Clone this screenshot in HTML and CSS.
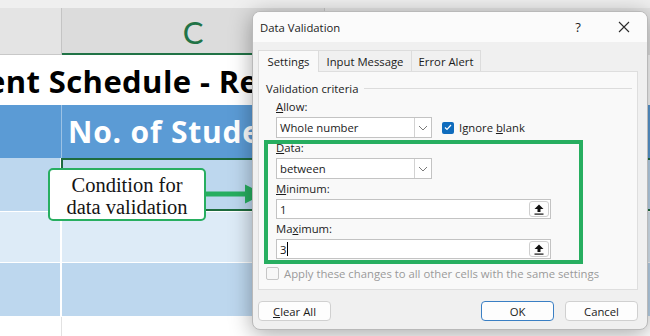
FILE: index.html
```html
<!DOCTYPE html>
<html lang="en">

<head>
    <meta charset="UTF-8">
    <meta name="viewport" content="width=device-width, initial-scale=1.0">
    <title>Data Validation</title>

    <link rel="stylesheet" href="styles.css">
</head>

<body>
    <div class="sheet">
        <div class="sheet-top"></div>
        <div class="row col-heads">
            <div class="cell col-b"></div>
            <div class="cell col-c">C</div>
            <div class="cell col-d"></div>
        </div>
        <div class="row title-row">
            <div class="title-text">ent Schedule - Report</div>
        </div>
        <div class="row head-row">
            <div class="cell col-b"></div>
            <div class="cell col-c">No. of Students</div>
            <div class="cell col-d"></div>
        </div>
        <div class="row band dark selected-row">
            <div class="cell col-b"></div>
            <div class="cell col-c selected"></div>
            <div class="cell col-d"></div>
        </div>
        <div class="row band light">
            <div class="cell col-b"></div>
            <div class="cell col-c"></div>
            <div class="cell col-d"></div>
        </div>
        <div class="row band dark">
            <div class="cell col-b"></div>
            <div class="cell col-c"></div>
            <div class="cell col-d"></div>
        </div>
        <div class="row band blank">
            <div class="cell col-b"></div>
            <div class="cell col-c"></div>
            <div class="cell col-d"></div>
        </div>
    </div>

    <!-- annotation drawn over the sheet -->
    <div class="callout">Condition for<br>data validation</div>
    <svg class="callout-arrow" width="58" height="20" viewBox="0 0 58 20">
        <rect x="0" y="7.5" width="42" height="5" fill="#27ae60" />
        <polygon points="39,0.5 58,10 39,19.5" fill="#27ae60" />
    </svg>

    <div class="dialog">
        <div class="dialog-title">
            <span class="dialog-name">Data Validation</span>
            <span class="caption-btn">?</span>
            <span class="caption-btn">
                <svg width="12" height="12" viewBox="0 0 12 12">
                    <path d="M1 1 L11 11 M11 1 L1 11" stroke="#2b2b2b" stroke-width="1.1" fill="none" />
                </svg>
            </span>
        </div>

        <div class="dialog-body">
            <div class="tabs">
                <div class="tab active">Settings</div>
                <div class="tab tab-input">Input Message</div>
                <div class="tab tab-error">Error Alert</div>
            </div>

            <div class="panel">
                <div class="group-head">
                    <span>Validation criteria</span>
                    <span class="group-line"></span>
                </div>

                <div class="fields">
                    <div class="field-label"><u>A</u>llow:</div>
                    <div class="allow-row">
                        <div class="select">
                            <span class="select-value">Whole number</span>
                            <span class="select-arrow">
                                <svg width="10" height="6" viewBox="0 0 10 6">
                                    <polyline points="1,1 5,5 9,1" fill="none" stroke="#7a7a7a" stroke-width="1" />
                                </svg>
                            </span>
                        </div>
                        <span class="check on">
                            <svg width="8" height="7" viewBox="0 0 8 7">
                                <polyline points="1,3.5 3,5.5 7,1" fill="none" stroke="#fff" stroke-width="1.2" />
                            </svg>
                        </span>
                        <span class="check-text">Ignore <u>b</u>lank</span>
                    </div>

                    <div class="field-label"><u>D</u>ata:</div>
                    <div class="select">
                        <span class="select-value">between</span>
                        <span class="select-arrow">
                            <svg width="10" height="6" viewBox="0 0 10 6">
                                <polyline points="1,1 5,5 9,1" fill="none" stroke="#7a7a7a" stroke-width="1" />
                            </svg>
                        </span>
                    </div>

                    <div class="field-label"><u>M</u>inimum:</div>
                    <div class="ref-input">
                        <span class="ref-value">1</span>
                        <span class="ref-btn">
                            <svg width="10" height="11" viewBox="0 0 10 11">
                                <polygon points="5,0.5 9.5,5 6.5,5 6.5,8 3.5,8 3.5,5 0.5,5" fill="#111" />
                                <rect x="0.5" y="9.5" width="9" height="1.2" fill="#111" />
                            </svg>
                        </span>
                    </div>

                    <div class="field-label">Ma<u>x</u>imum:</div>
                    <div class="ref-input">
                        <span class="ref-value">3<span class="caret"></span></span>
                        <span class="ref-btn">
                            <svg width="10" height="11" viewBox="0 0 10 11">
                                <polygon points="5,0.5 9.5,5 6.5,5 6.5,8 3.5,8 3.5,5 0.5,5" fill="#111" />
                                <rect x="0.5" y="9.5" width="9" height="1.2" fill="#111" />
                            </svg>
                        </span>
                    </div>
                </div>

                <div class="apply-row">
                    <span class="check off"></span>
                    <span>Apply these changes to all other cells with the same settings</span>
                </div>

                <!-- highlight drawn over the dialog -->
                <div class="highlight"></div>
            </div>

            <div class="buttons">
                <div class="btn"><u>C</u>lear All</div>
                <div class="btn btn-ok">OK</div>
                <div class="btn">Cancel</div>
            </div>
        </div>
    </div>
</body>

</html>
```

FILE: styles.css
```css
body {
    margin: 0;
    width: 650px;
    height: 336px;
    overflow: hidden;
    position: relative;
    background-color: #ffffff;
    font-family: "Open Sans", "Noto Sans", sans-serif;
}

/* ---- spreadsheet behind the dialog ---- */

.sheet {
    display: flex;
    flex-direction: column;
    height: 336px;
}

.sheet-top {
    height: 8px;
    background-color: #efefef;
}

.row {
    display: flex;
}

.cell {
    box-sizing: border-box;
}

.col-b {
    width: 62px;
    flex: none;
}

.col-c {
    width: 262px;
    flex: none;
}

.col-d {
    flex: 1;
}

.col-heads {
    height: 47px;
    background-color: #e4e4e4;
}

.col-heads .col-b {
    border-right: 1px solid #c4c4c4;
    border-bottom: 1px solid #c8c8c8;
}

.col-heads .col-c {
    background-color: #dcdcdc;
    border-bottom: 2px solid #217346;
    color: #217346;
    font-family: Lato, "Noto Sans", sans-serif;
    font-size: 31px;
    display: flex;
    align-items: center;
    justify-content: center;
    padding-top: 2px;
}

.col-heads .col-d {
    border-left: 1px solid #c4c4c4;
}

.title-row {
    height: 50px;
    background-color: #ffffff;
    overflow: hidden;
    align-items: center;
}

.title-text {
    margin-left: -13px;
    white-space: nowrap;
    font-family: "Open Sans", "Noto Sans", sans-serif;
    font-weight: bold;
    font-size: 31px;
    letter-spacing: 0.4px;
    color: #000;
    padding-top: 1px;
}

.head-row {
    height: 53px;
    background-color: #5b9bd5;
}

.head-row .col-b {
    border-right: 1px solid #9cc2e5;
}

.head-row .col-c {
    color: #ffffff;
    font-family: "Open Sans", "Noto Sans", sans-serif;
    font-weight: bold;
    font-size: 30px;
    letter-spacing: 0.8px;
    white-space: nowrap;
    padding: 6px 0 0 6px;
}

.band {
    border-top: 1px solid #ffffff;
}

.band .col-b {
    border-right: 2px solid #ffffff;
}

.band.dark {
    height: 53px;
    background-color: #bdd7ee;
}

.band.light {
    height: 50px;
    background-color: #ddebf7;
}

.band.blank {
    flex: 1;
    background-color: #ffffff;
}

.band.blank .col-b {
    border-right: 1px solid #e2e2e2;
}

.selected-row {
    border-top: none;
}

.selected {
    border-left: 2px solid #1e6b3e;
    border-top: 2px solid #1e6b3e;
    border-bottom: 2px solid #1e6b3e;
    margin-left: -1px;
}

.selected-row .col-d {
    border-top: 2px solid #1e6b3e;
    border-bottom: 2px solid #1e6b3e;
}

/* ---- annotation ---- */

.callout {
    position: absolute;
    left: 48px;
    top: 168px;
    width: 158px;
    height: 53px;
    box-sizing: border-box;
    border: 2px solid #27ae60;
    border-radius: 5px;
    background-color: #ffffff;
    font-family: "Liberation Serif", serif;
    font-size: 20.5px;
    line-height: 22px;
    color: #141414;
    text-align: center;
    padding-top: 4px;
}

.callout-arrow {
    position: absolute;
    left: 206px;
    top: 184px;
}

/* ---- dialog ---- */

.dialog {
    position: absolute;
    left: 252px;
    top: 11px;
    width: 396px;
    box-sizing: border-box;
    border: 1px solid #b9b9b9;
    border-radius: 8px;
    overflow: hidden;
    background-color: #f0f0f0;
    box-shadow: 0 4px 22px rgba(0, 0, 0, 0.35);
    font-size: 11.3px;
    color: #1b1b1b;
}

.dialog-title {
    height: 30px;
    display: flex;
    align-items: center;
    background-color: #fbfbfb;
    padding-left: 7px;
}

.dialog-name {
    flex: 1;
}

.caption-btn {
    width: 46px;
    height: 30px;
    display: flex;
    align-items: center;
    justify-content: center;
    font-size: 13px;
}

.dialog-body {
    padding: 8px 9px 8px 5px;
}

.tabs {
    display: flex;
    height: 21px;
}

.tab {
    box-sizing: border-box;
    height: 21px;
    border: 1px solid #dcdcdc;
    border-bottom: none;
    margin-left: -1px;
    display: flex;
    align-items: center;
    justify-content: center;
    background-color: #f0f0f0;
}

.tab.active {
    width: 61px;
    margin-left: 0;
    background-color: #f9f9f9;
    position: relative;
    z-index: 1;
    height: 22px;
}

.tab-input {
    width: 94px;
}

.tab-error {
    width: 70px;
}

.panel {
    position: relative;
    height: 219px;
    box-sizing: border-box;
    border: 1px solid #dedede;
    background-color: #f9f9f9;
}

.group-head {
    display: flex;
    align-items: center;
    height: 16px;
    margin-top: 8px;
    padding: 0 5px 0 7px;
}

.group-line {
    flex: 1;
    height: 1px;
    margin-left: 6px;
    background-color: #dcdcdc;
}

.fields {
    display: flex;
    flex-direction: column;
    align-items: flex-start;
    gap: 2px;
    margin-top: 3px;
    padding-left: 17px;
}

.field-label {
    height: 16px;
    line-height: 16px;
}

.allow-row {
    display: flex;
    align-items: center;
}

.select {
    width: 156px;
    height: 21px;
    box-sizing: border-box;
    border: 1px solid #c3c3c3;
    background-color: #ffffff;
    display: flex;
}

.select-value {
    flex: 1;
    line-height: 19px;
    padding-left: 3px;
}

.select-arrow {
    width: 16px;
    border-left: 1px solid #d2d2d2;
    display: flex;
    align-items: center;
    justify-content: center;
}

.check {
    width: 12px;
    height: 12px;
    box-sizing: border-box;
    border-radius: 2px;
    display: inline-flex;
    align-items: center;
    justify-content: center;
    flex: none;
}

.check.on {
    margin-left: 10px;
    background-color: #0f6cbd;
}

.check.off {
    width: 13px;
    height: 13px;
    border: 1px solid #c6c6c6;
    background-color: #f7f7f7;
}

.check-text {
    margin-left: 5px;
}

.ref-input {
    width: 275px;
    height: 20px;
    box-sizing: border-box;
    border: 1px solid #c3c3c3;
    background-color: #ffffff;
    display: flex;
    align-items: center;
}

.ref-value {
    flex: 1;
    padding-left: 3px;
    display: flex;
    align-items: center;
}

.caret {
    width: 1px;
    height: 14px;
    margin-left: 1px;
    background-color: #000;
}

.ref-btn {
    width: 20px;
    height: 16px;
    box-sizing: border-box;
    margin-right: 1px;
    border: 1px solid #cfcfcf;
    border-radius: 3px;
    background-color: #fdfdfd;
    display: flex;
    align-items: center;
    justify-content: center;
}

.apply-row {
    display: flex;
    align-items: center;
    gap: 5px;
    margin-top: 6px;
    padding-left: 7px;
    height: 16px;
    color: #9a9a9a;
}

.highlight {
    position: absolute;
    left: 5px;
    top: 68px;
    width: 319px;
    height: 124px;
    box-sizing: border-box;
    border: 4px solid #27ae60;
}

.buttons {
    display: flex;
    margin-top: 11px;
}

.btn {
    width: 73px;
    height: 20px;
    box-sizing: border-box;
    border: 1px solid #d0d0d0;
    border-radius: 4px;
    background-color: #fdfdfd;
    display: flex;
    align-items: center;
    justify-content: center;
}

.btn-ok {
    margin-left: auto;
    border-color: #3a7fc4;
}

.btn:last-child {
    margin-left: 11px;
}
```
